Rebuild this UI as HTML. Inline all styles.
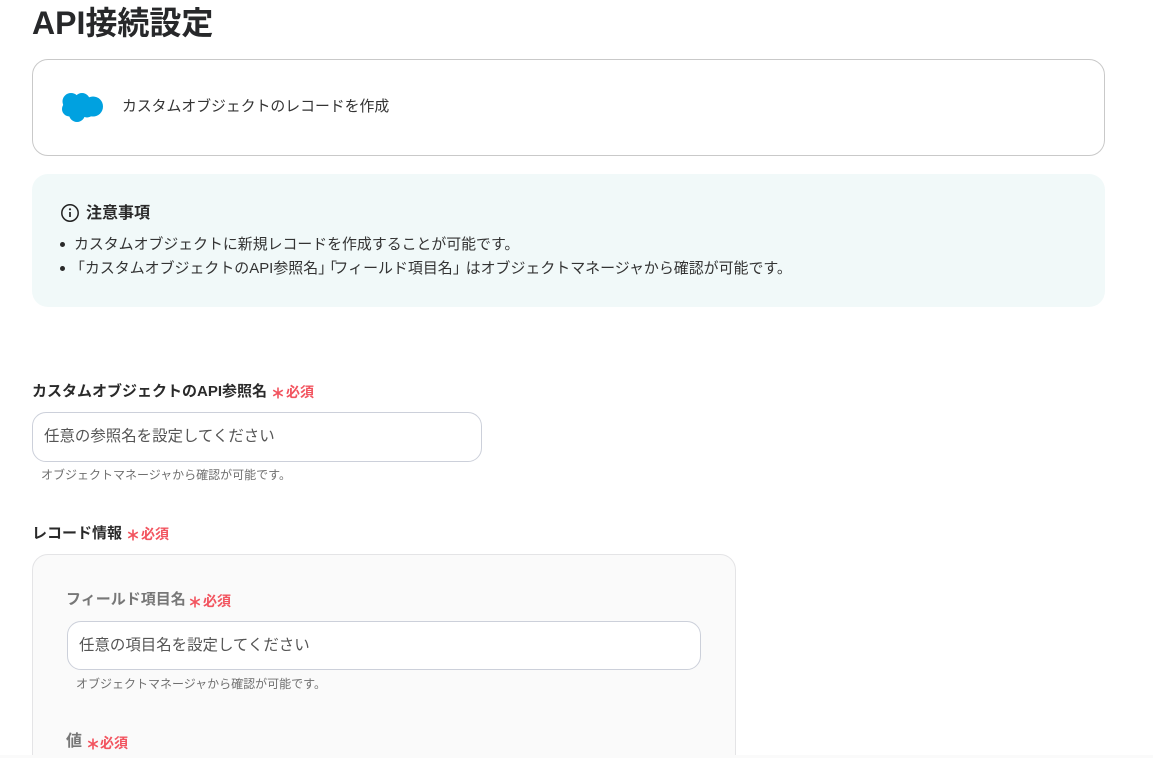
<!DOCTYPE html>
<html lang="ja"><head><meta charset="utf-8">
<style>
html,body{margin:0;padding:0;background:#fff;width:1153px;height:758px;overflow:hidden}
body{position:relative;font-family:"Liberation Sans","Noto Sans CJK JP",sans-serif;color:#2a2a2a}
*{box-sizing:border-box}
.t{position:absolute;white-space:nowrap;font-family:"Liberation Sans","Noto Sans CJK JP",sans-serif}
.b{position:absolute}
.req{color:#f2545f;font-size:14px;font-weight:700}
.inp{position:absolute;border:1px solid #ccd0da;border-radius:14px;background:#fff}
</style></head><body>
<div class="t" style="left:32px;top:1px;font-size:32px;line-height:44px;font-weight:700;color:#27282a">API接続設定</div>
<div class="b" style="left:32px;top:59px;width:1073px;height:97px;border:1px solid #c9c9c9;border-radius:16px"></div>
<svg class="b" style="left:61px;top:92px" width="43" height="31" viewBox="0 0 43 31"><g fill="#00a1e0"><circle cx="10" cy="9.5" r="8.5"/><circle cx="21" cy="9" r="8"/><circle cx="32" cy="14.5" r="10"/><circle cx="8.5" cy="17" r="7.5"/><circle cx="16" cy="22" r="8"/><circle cx="26" cy="18" r="7.5"/><rect x="8" y="8" width="24" height="14"/></g></svg>
<div class="t" style="left:122px;top:96px;font-size:14.85px;line-height:22px;color:#333">カスタムオブジェクトのレコードを作成</div>
<div class="b" style="left:32px;top:174px;width:1073px;height:133px;background:#f1f9f9;border-radius:16px"></div>
<svg class="b" style="left:60px;top:203px" width="20" height="20" viewBox="0 0 20 20"><circle cx="10" cy="10" r="8.2" fill="none" stroke="#222" stroke-width="1.5"/><path d="M10 9v5" stroke="#222" stroke-width="1.7" fill="none"/><circle cx="10" cy="6.3" r="1.1" fill="#222"/></svg>
<div class="t" style="left:86px;top:203px;font-size:16px;line-height:22px;font-weight:700;color:#2a2a2a">注意事項</div>
<div class="b" style="left:60px;top:242px;width:5px;height:5px;border-radius:50%;background:#2a2a2a"></div>
<div class="t" style="left:74px;top:234px;font-size:14.9px;line-height:22px;color:#333">カスタムオブジェクトに新規レコードを作成することが可能です。</div>
<div class="b" style="left:60px;top:266px;width:5px;height:5px;border-radius:50%;background:#2a2a2a"></div>
<div class="t" style="left:70px;top:258px;font-size:14.95px;line-height:22px;color:#333">「カスタムオブジェクトのAPI参照名<span style="letter-spacing:-3.5px">」「</span>フィールド項目名<span style="letter-spacing:-2px">」</span>はオブジェクトマネージャから確認が可能です。</div>
<div class="t" style="left:32px;top:381px;font-size:15px;line-height:22px;font-weight:700;color:#2a2a2a">カスタムオブジェクトのAPI参照名</div>
<svg class="b" style="left:271.5px;top:387px" width="12" height="12" viewBox="0 0 12 12"><path d="M6 .5v11M1.2 3.2l9.6 5.6M10.8 3.2l-9.6 5.6" stroke="#f2545f" stroke-width="1.6" fill="none"/></svg>
<div class="t req" style="left:286px;top:382.5px;line-height:18px">必須</div>
<div class="inp" style="left:32px;top:412px;width:450px;height:50px"></div>
<div class="t" style="left:44px;top:425px;font-size:15.45px;line-height:24px;color:#555">任意の参照名を設定してください</div>
<div class="t" style="left:41px;top:466px;font-size:12px;line-height:18px;color:#6f6f6f">オブジェクトマネージャから確認が可能です。</div>
<div class="t" style="left:32px;top:523px;font-size:15px;line-height:22px;font-weight:700;color:#2a2a2a">レコード情報</div>
<svg class="b" style="left:126.5px;top:529px" width="12" height="12" viewBox="0 0 12 12"><path d="M6 .5v11M1.2 3.2l9.6 5.6M10.8 3.2l-9.6 5.6" stroke="#f2545f" stroke-width="1.6" fill="none"/></svg>
<div class="t req" style="left:141px;top:524.5px;line-height:18px">必須</div>
<div class="b" style="left:32px;top:554px;width:704px;height:240px;background:#fafafa;border:1px solid #e4e4e6;border-radius:16px"></div>
<div class="t" style="left:66px;top:589px;font-size:15px;line-height:22px;font-weight:700;color:#777">フィールド項目名</div>
<svg class="b" style="left:188.5px;top:596px" width="12" height="12" viewBox="0 0 12 12"><path d="M6 .5v11M1.2 3.2l9.6 5.6M10.8 3.2l-9.6 5.6" stroke="#f2545f" stroke-width="1.6" fill="none"/></svg>
<div class="t req" style="left:203px;top:591.5px;line-height:18px">必須</div>
<div class="inp" style="left:67px;top:621px;width:634px;height:49px"></div>
<div class="t" style="left:79px;top:634px;font-size:15.45px;line-height:24px;color:#555">任意の項目名を設定してください</div>
<div class="t" style="left:76px;top:675px;font-size:12px;line-height:18px;color:#6f6f6f">オブジェクトマネージャから確認が可能です。</div>
<div class="t" style="left:66px;top:731px;font-size:16px;line-height:22px;font-weight:700;color:#777">値</div>
<svg class="b" style="left:86.5px;top:738px" width="12" height="12" viewBox="0 0 12 12"><path d="M6 .5v11M1.2 3.2l9.6 5.6M10.8 3.2l-9.6 5.6" stroke="#f2545f" stroke-width="1.6" fill="none"/></svg>
<div class="t req" style="left:100px;top:733.5px;line-height:18px">必須</div>
<div class="b" style="left:0;top:755px;width:1153px;height:3px;background:#fafafa"></div>
</body></html>
